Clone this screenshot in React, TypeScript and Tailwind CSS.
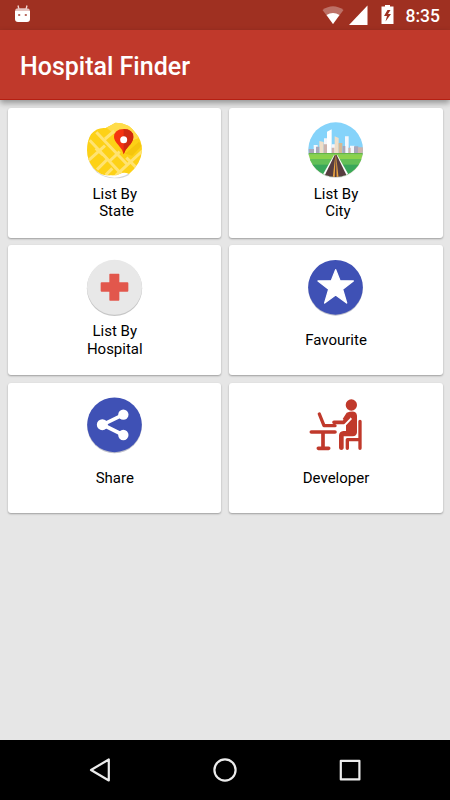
import type { ReactNode } from "react";

interface MenuItem {
  lines: string[];
  icon: ReactNode;
}

function StateIcon() {
  return (
    <>
      <clipPath id="mapClip">
        <path d="M48 58Q66 36 92 39Q110 30 121 23Q162 22 184 57Q201 76 201 106Q199 146 162 177Q147 170 134 177Q120 183 108 181Q78 185 56 160Q36 137 36 106Q36 78 48 58Z" />
      </clipPath>
      <path
        d="M46 61Q38 78 37 108Q37 146 65 172Q88 190 120 190Q147 190 163 179Z"
        fill="#000"
        opacity="0.16"
      />
      <circle cx="118.500" cy="106" r="82" fill="#fff" />
      <g clipPath="url(#mapClip)">
        <rect x="30" y="20" width="180" height="175" fill="#fdd116" />
        <path d="M92 36L121 20H215V60L150 85Z" fill="#ffdc4a" />
        <path
          d="M40 137L90 92M64 52L156 148M44 76L142 180M66 164L98 132M62 100L84 120M118 48L90 72M112 160L92 180M206 104L122 182M154 128L206 180M134 110L104 138"
          stroke="#ffe372"
          strokeWidth="9"
          fill="none"
        />
        <path d="M150 116L192 80L200 92L172 122Z" fill="#eebc08" opacity="0.55" />
      </g>
      <path d="M146 118Q143 104 130 90Q117 76 117 66Q117 43 146 42Q175 43 175 66Q175 80 162 92Q149 105 146 118Z" fill="#f5330f" />
      <path d="M146 118V42Q175 43 175 66Q175 80 162 92Q149 105 146 118Z" fill="#cf2a10" />
      <circle cx="146" cy="74" r="10.500" fill="#fff" />
    </>
  );
}

function CityIcon() {
  return (
    <>
      <clipPath id="cityClip">
        <circle cx="119" cy="104" r="82" />
      </clipPath>
      <circle cx="119" cy="107" r="82" fill="#000" opacity="0.14" />
      <g clipPath="url(#cityClip)">
        <rect x="35" y="20" width="170" height="100" fill="#85d3fa" />
        <path d="M53 90H65V118H53ZM84 70H93V118H84ZM107 88H120V118H107ZM147 64H158V118H147ZM162 92H176V118H162Z" fill="#f3f6fb" />
        <path d="M93 50L107 43V118H93Z" fill="#fff" />
        <path d="M70 78L83 81V118H70ZM116 64L128 69V118H116Z" fill="#efdec8" />
        <path d="M128 84H139V118H128Z" fill="#d6b893" />
        <path d="M38 102H54V118H38ZM60 95H70V118H60ZM140 93H148V118H140ZM174 94H187V118H174Z" fill="#a8a6b9" />
        <path d="M83 88H93V118H83ZM107 98H115V118H107ZM157 98H164V118H157ZM186 97H202V118H186Z" fill="#cdb4ad" />
        <rect x="35" y="114" width="170" height="5" fill="#66b646" />
        <rect x="35" y="118" width="170" height="75" fill="#8bd24b" />
        <rect x="35" y="132" width="170" height="60" fill="#62bf57" />
        <rect x="35" y="149" width="170" height="43" fill="#39a75a" />
        <path d="M114 120H124L165 192H73Z" fill="#fff" />
        <path d="M116 120H122L157 192H81Z" fill="#573d40" />
        <path d="M118 120L110 190H116L119 120ZM120 120L122 190H128Z" fill="#eba541" />
      </g>
    </>
  );
}

function HospitalIcon() {
  return (
    <>
      <circle cx="118.500" cy="109" r="83" fill="#c6c6c6" />
      <circle cx="118.500" cy="106" r="82.500" fill="#e8e8e8" />
      <path
        d="M105 65H131Q133 65 133 67V91H157Q160 91 160 94V116Q160 119 157 119H133V143Q133 146 131 146H105Q103 146 103 143V119H80Q77 119 77 116V94Q77 91 80 91H103V67Q103 65 105 65Z"
        fill="#e2574c"
      />
    </>
  );
}

function FavouriteIcon() {
  return (
    <>
      <circle cx="118.500" cy="109" r="82" fill="#bfc0cb" />
      <circle cx="118.500" cy="106" r="82" fill="#3f51b5" />
      <path
        d="M119 53L132 86L172 87L140 112L152 153L119 129L86 153L98 112L66 87L106 86Z"
        fill="#fff"
        stroke="#fff"
        strokeWidth="4"
        strokeLinejoin="round"
      />
    </>
  );
}

function ShareIcon() {
  return (
    <>
      <circle cx="118.500" cy="108" r="82" fill="#bfc0cb" />
      <circle cx="118.500" cy="104.500" r="82" fill="#3f51b5" />
      <path d="M145 74L83 104L145 135" fill="none" stroke="#fff" strokeWidth="11" />
      <g fill="#fff">
        <circle cx="145" cy="74" r="15.500" />
        <circle cx="82" cy="104" r="16.500" />
        <circle cx="145" cy="135" r="15.500" />
      </g>
    </>
  );
}

function DeveloperIcon() {
  return (
    <g fill="none" stroke="#c0392b" strokeLinecap="round" strokeLinejoin="round">
      <circle cx="166" cy="45" r="17" fill="#c0392b" stroke="none" />
      {/* laptop */}
      <path d="M70 72L84 107H117" strokeWidth="10" />
      {/* arm */}
      <path d="M114 97H143L159 80" strokeWidth="11" />
      {/* body and legs */}
      <path
        d="M152 68Q181 58 183 77V127Q182 139 170 139H143V175Q142 180 136 180Q130 180 129 174V136Q130 124 142 123H150V106L168 87L160 78L145 91L140 87Z"
        fill="#c0392b"
        stroke="none"
      />
      {/* desk */}
      <path d="M46 126H117M81 126V174M67 175H98" strokeWidth="11" />
      {/* chair */}
      <path d="M154 175V149H192M192 94V175" strokeWidth="10" />
    </g>
  );
}

// The leading space is part of the label and shifts the centred line
const items: MenuItem[] = [
  { lines: ["List By", "\u00a0State"], icon: <StateIcon /> },
  { lines: ["List By", "\u00a0City"], icon: <CityIcon /> },
  { lines: ["List By", "Hospital"], icon: <HospitalIcon /> },
  { lines: ["Favourite"], icon: <FavouriteIcon /> },
  { lines: ["Share"], icon: <ShareIcon /> },
  { lines: ["Developer"], icon: <DeveloperIcon /> },
];

function MenuCard({ lines, icon }: MenuItem) {
  return (
    <button className="flex flex-col items-center h-[130px] pt-[7.4px] pl-[0.8px] bg-white rounded-[3px] shadow-[0_1px_2px_rgba(0,0,0,0.32)]">
      <svg viewBox="0 0 240 210" className="w-20 h-[70px] shrink-0">
        {icon}
      </svg>
      <span className="flex flex-col justify-center h-[36px] mt-[0.6px] text-[15px] leading-[17.5px] text-black">
        {lines.map((line) => (
          <span key={line}>{line}</span>
        ))}
      </span>
    </button>
  );
}

function StatusBar() {
  return (
    <div className="flex items-center justify-between h-[30px] pl-[14px] pr-[10px] bg-[#9f3021]">
      <svg viewBox="0 0 16 20" className="w-4 h-5">
        <path d="M5 4.500L4 0.500M12 4.500L13 0.500" stroke="#f3d9d6" strokeWidth="1.300" />
        <path d="M1.200 5Q1.500 3.500 4 3.300H12.500Q15.500 3.500 15.800 5V7H1.200Z" fill="#e6c4c0" />
        <path d="M1 6H16V14Q16 17 13 17H4Q1 17 1 14Z" fill="#fff" />
        <path d="M4.200 9H6.200V11H4.200ZM10.800 9H12.800V11H10.800Z" fill="#b96a60" />
      </svg>
      <div className="flex items-center">
        <svg viewBox="0 0 76 24" className="w-[76px] h-6">
          {/* wifi */}
          <path d="M0.500 7Q11 -0.500 21.500 7L11 21Z" fill="#bd7167" />
          <path d="M4.500 12Q11 8 17.500 12L11 21Z" fill="#fff" />
          {/* signal */}
          <path d="M45.500 2.500V22H27Z" fill="#fff" />
          {/* battery */}
          <path d="M63 2H68V3.500H71.500V21H59.500V3.500H63Z" fill="#fff" />
          <path d="M65.500 7L62 13H65L63.500 18.500L69 11H66L68.500 7Z" fill="#9f3021" />
        </svg>
        <span className="w-[42px] text-[17.5px] leading-5 font-medium text-white text-right whitespace-nowrap mt-[2px]">
          8:35
        </span>
      </div>
    </div>
  );
}

function NavBar() {
  return (
    <div className="flex justify-between items-center h-[60px] px-[88px] bg-black">
      <button>
        <svg viewBox="0 0 24 24" className="w-6 h-6" fill="none" stroke="#ececec" strokeWidth="2.2" strokeLinejoin="round">
          <path d="M20.800 1.500V22.500L3 12Z" />
        </svg>
      </button>
      <button>
        <svg viewBox="0 0 24 24" className="w-6 h-6" fill="none" stroke="#ececec" strokeWidth="2.2">
          <circle cx="12" cy="12" r="10.600" />
        </svg>
      </button>
      <button>
        <svg viewBox="0 0 24 24" className="w-6 h-6" fill="none" stroke="#ececec" strokeWidth="2.2" strokeLinejoin="round">
          <rect x="2.800" y="2.800" width="18.600" height="18.600" />
        </svg>
      </button>
    </div>
  );
}

export default function App() {
  return (
    <div className="flex flex-col w-[450px] h-[800px] overflow-hidden bg-[#e6e6e6] font-['Roboto',sans-serif]">
      <StatusBar />
      <header className="flex items-center h-[70px] px-5 pt-[4px] bg-[#c0392b] border-b border-[#b51f12] shadow-[0_3px_6px_rgba(0,0,0,0.36)]">
        <h1 className="text-[25px] leading-none font-medium text-white">Hospital Finder</h1>
      </header>
      <main className="grid grid-cols-2 content-start gap-[7.5px] flex-1 p-[7.5px]">
        {items.map((item) => (
          <MenuCard key={item.lines.join("")} {...item} />
        ))}
      </main>
      <NavBar />
    </div>
  );
}
